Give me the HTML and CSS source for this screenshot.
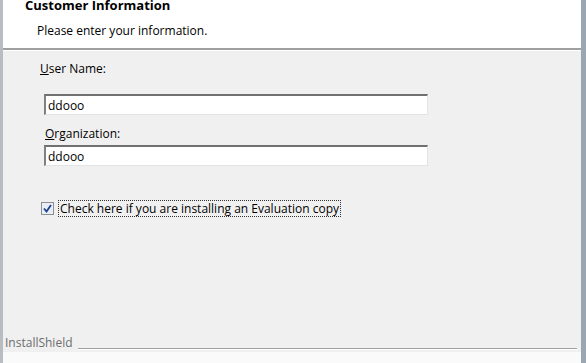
FILE: index.html
```html
<!DOCTYPE html>
<html lang="en">
<head>
	<meta charset="UTF-8">
	<title>Customer Information</title>
	<link rel="stylesheet" href="styles.css">
</head>
<body>
	<div class="dialog">
		<div class="banner">
			<div class="title">Customer Information</div>
			<div class="subtitle">Please enter your information.</div>
		</div>

		<div class="content">
			<label class="label" for="user"><u>U</u>ser Name:</label>
			<input class="field" id="user" type="text" value="ddooo">

			<label class="label label2" for="org"><u>O</u>rganization:</label>
			<input class="field field2" id="org" type="text" value="ddooo">

			<div class="check">
				<span class="box">
					<svg width="9" height="9" viewBox="0 0 9 9"><path d="M1 4.5 L3.5 7.5 L8 1" fill="none" stroke="#1e3f8c" stroke-width="1.8"/></svg>
				</span>
				<span class="checktext">Check here if you are installing an Evaluation copy</span>
			</div>
		</div>

		<div class="footer">
			<span class="brand">InstallShield</span>
			<span class="rule"></span>
		</div>
	</div>
</body>
</html>
```

FILE: styles.css
```css
*{
	margin: 0;
	padding: 0;
	box-sizing: border-box;
}
body{
	width: 586px;
	height: 363px;
	overflow: hidden;
	background: #fff;
	font-family: "Open Sans", "Liberation Sans", sans-serif;
	font-size: 12px;
	color: #000;
}
.dialog{
	height: 363px;
	display: flex;
	flex-direction: column;
	border-left: 3px solid #b9bcc0;
	border-right: 5px solid #9aa6b2;
	background: #f0f0f0;
}
.banner{
	height: 50px;
	background: #fff;
	border-bottom: 2px solid #a0a0a0;
	box-shadow: 0 1px 0 #fff;
	padding-left: 22px;
}
.title{
	font-weight: bold;
	font-size: 13px;
	line-height: 15px;
	margin-top: -2px;
}
.subtitle{
	margin-top: 10px;
	padding-left: 12px;
	line-height: 16px;
}
.content{
	flex: 1;
	padding: 12px 0 0 37px;
	display: flex;
	flex-direction: column;
	align-items: flex-start;
}
.label{
	line-height: 14px;
}
.label2{
	margin-top: 12px;
	margin-left: 5px;
}
.field{
	width: 384px;
	height: 21px;
	margin-top: 18px;
	margin-left: 4px;
	border: 1px solid #e2e3e5;
	border-top: 2px solid #707070;
	border-left: 2px solid #808080;
	background: #fff;
	font: inherit;
	padding: 0 2px;
	outline: none;
}
.field2{
	margin-top: 4px;
}
.check{
	display: flex;
	align-items: center;
	margin-top: 34px;
	margin-left: 1px;
}
.box{
	width: 13px;
	height: 13px;
	border: 1px solid #8f8f8f;
	background: #e8eef8;
	display: flex;
	align-items: center;
	justify-content: center;
}
.checktext{
	margin-left: 4px;
	border: 1px dotted #333;
	padding: 0 1px;
	line-height: 15px;
}
.footer{
	height: 32px;
	display: flex;
	align-items: center;
	padding: 0 4px 10px 2px;
	background: linear-gradient(#f0f0f0 21px, #fafafa 21px);
}
.brand{
	color: #6d6d6d;
}
.rule{
	flex: 1;
	height: 2px;
	margin: 14px 0 0 5px;
	border-top: 1px solid #a0a0a0;
	border-bottom: 1px solid #fff;
}
```
